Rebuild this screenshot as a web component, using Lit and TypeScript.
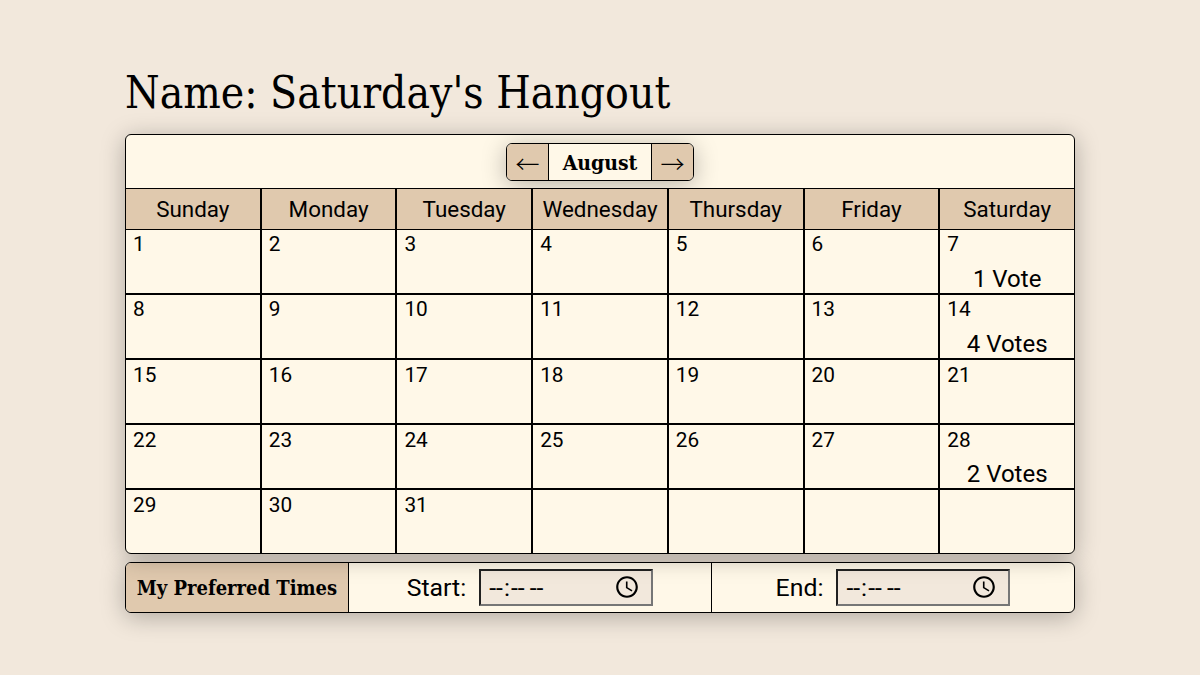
import { LitElement, html, css } from "lit";
import { customElement } from "lit/decorators.js";

const DAYS = ["Sunday", "Monday", "Tuesday", "Wednesday", "Thursday", "Friday", "Saturday"];
const VOTES: Record<number, string> = { 7: "1 Vote", 14: "4 Votes", 28: "2 Votes" };

@customElement("app-root")
export class AppRoot extends LitElement {
  static styles = css`
    :host {
      display: block;
      height: 675px;
      padding-top: 62px;
      box-sizing: border-box;
      background: #f2e8dc;
      color: #000;
      font-family: "Roboto", "Liberation Sans", sans-serif;
    }
    .page { width: 950px; margin: 0 auto; display: flex; flex-direction: column; }
    h1 {
      margin: 0 0 13px;
      padding-top: 3px;
      font: 400 44px/56px "DejaVu Serif Condensed", "DejaVu Serif", serif;
    }
    .card {
      background: #fff8e8;
      border: 1px solid #000;
      border-radius: 6px;
      overflow: hidden;
      box-shadow: 0 4px 24px rgba(0, 0, 0, 0.28);
    }
    .calendar { position: relative; z-index: 1; }
    .nav {
      display: flex;
      justify-content: center;
      align-items: flex-start;
      height: 53px;
      padding-top: 8px;
      box-sizing: border-box;
    }
    .group {
      display: flex;
      height: 38px;
      border: 1px solid #000;
      border-radius: 6px;
      overflow: hidden;
      box-sizing: border-box;
      box-shadow: 0 4px 24px rgba(0, 0, 0, 0.28);
    }
    .arrow {
      width: 41px;
      background: #e0c9ae;
      display: flex;
      align-items: center;
      justify-content: center;
      font: 300 24px "Noto Sans CJK SC", sans-serif;
      border: 0;
      padding: 0;
      color: #000;
    }
    .month {
      width: 104px;
      box-sizing: border-box;
      border-left: 1px solid #000;
      border-right: 1px solid #000;
      display: flex;
      align-items: center;
      justify-content: center;
      font: 700 21px "DejaVu Serif Condensed", "DejaVu Serif", serif;
    }
    .grid {
      display: grid;
      grid-template-columns: repeat(7, 1fr);
      grid-template-rows: 42px 64px repeat(4, 65px);
      margin: 0 -1px -1px;
    }
    .head, .cell {
      border-left: 1px solid #000;
      border-right: 1px solid #000;
      box-sizing: border-box;
      min-width: 0;
    }
    .head {
      background: #e0c9ae;
      border-top: 1px solid #000;
      border-bottom: 1px solid #000;
      display: flex;
      align-items: center;
      justify-content: center;
      font-size: 22.4px;
    }
    .cell {
      padding: 2px 7px 0;
      font-size: 20.8px;
      line-height: 24px;
      display: flex;
      flex-direction: column;
      border-top: 1px solid #000;
      border-bottom: 1px solid #000;
    }
    .cell.first-row { border-top: 0; }
    .cell.lower { padding-top: 3px; }
    .votes { font-size: 24px; line-height: 28px; text-align: center; margin-top: 9px; }
    .cell.lower .votes { margin-top: 8px; }
    .footer {
      display: flex;
      margin-top: 8px;
      height: 51px;
      box-sizing: border-box;
    }
    .label {
      width: 222px;
      background: #e0c9ae;
      border-right: 1px solid #000;
      display: flex;
      align-items: center;
      justify-content: center;
      white-space: nowrap;
      font: 700 20px "DejaVu Serif Condensed", "DejaVu Serif", serif;
    }
    .slot {
      flex: 1;
      display: flex;
      align-items: center;
      justify-content: center;
      gap: 13px;
      font-size: 24.8px;
    }
    .slot + .slot { border-left: 1px solid #000; }
    input {
      width: 174px;
      height: 37px;
      box-sizing: border-box;
      background: #f2e8dc;
      font: 400 24.8px "Roboto", sans-serif;
      letter-spacing: 1px;
      padding: 1px 8px 1px 7px;
      margin: 0;
    }
  `;

  connectedCallback() {
    super.connectedCallback();
    document.documentElement.style.background = "#f2e8dc";
  }

  render() {
    const cells = [];
    for (let i = 1; i <= 35; i++) {
      cells.push(html`<div class="cell ${i <= 7 ? "first-row" : ""} ${i > 14 ? "lower" : ""}">
        <span>${i <= 31 ? i : ""}</span>
        ${VOTES[i] ? html`<span class="votes">${VOTES[i]}</span>` : ""}
      </div>`);
    }
    return html`<div class="page">
      <h1>Name: Saturday's Hangout</h1>
      <div class="card calendar">
        <div class="nav">
          <div class="group">
            <button class="arrow">←</button>
            <div class="month">August</div>
            <button class="arrow">→</button>
          </div>
        </div>
        <div class="grid">
          ${DAYS.map((d) => html`<div class="head">${d}</div>`)}
          ${cells}
        </div>
      </div>
      <div class="card footer">
        <div class="label">My Preferred Times</div>
        <div class="slot"><span>Start:</span><input type="time" /></div>
        <div class="slot"><span>End:</span><input type="time" /></div>
      </div>
    </div>`;
  }
}
